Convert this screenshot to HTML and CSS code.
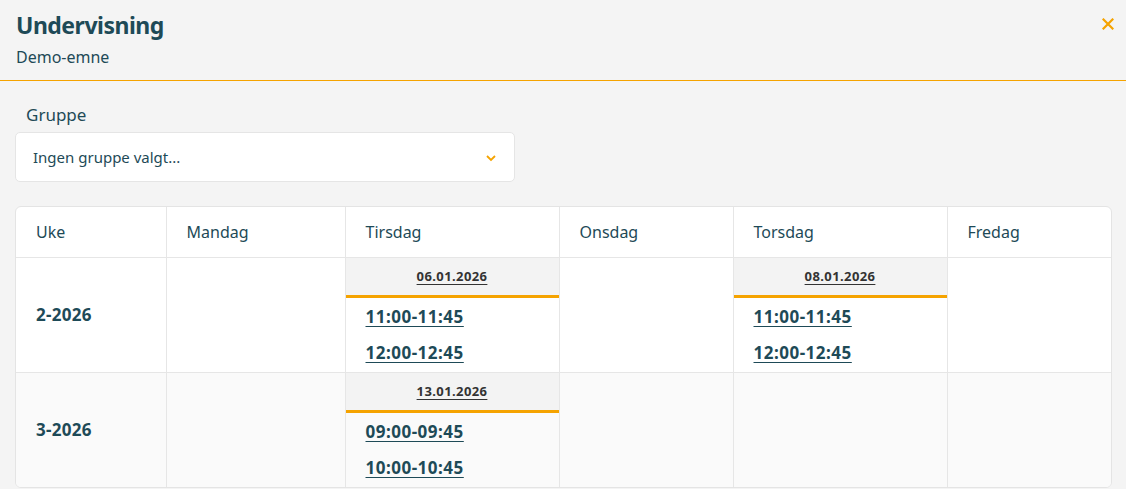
FILE: index.html
```html
<!DOCTYPE html>
<html lang="no">
<head>
<meta charset="utf-8">
<title>Undervisning</title>
<link rel="stylesheet" href="styles.css">
</head>
<body>
<header class="top">
  <div class="titles">
    <h1 class="title">Undervisning</h1>
    <div class="subtitle">Demo-emne</div>
  </div>
  <button class="close" aria-label="Lukk">
    <svg width="12" height="12" viewBox="0 0 12 12"><path d="M1.5 1.5 L10.5 10.5 M10.5 1.5 L1.5 10.5" stroke="#f5a300" stroke-width="2.2" stroke-linecap="square"/></svg>
  </button>
</header>
<main class="content">
  <label class="label">Gruppe</label>
  <div class="select">
    <span>Ingen gruppe valgt...</span>
    <svg class="chev" width="12" height="8" viewBox="0 0 12 8"><path d="M2 2 L6 6 L10 2" fill="none" stroke="#f5a300" stroke-width="1.8"/></svg>
  </div>
  <div class="tablewrap">
    <table class="sched">
      <colgroup>
        <col class="c1"><col class="c2"><col class="c3"><col class="c4"><col class="c5"><col class="c6">
      </colgroup>
      <thead>
        <tr><th>Uke</th><th>Mandag</th><th>Tirsdag</th><th>Onsdag</th><th>Torsdag</th><th>Fredag</th></tr>
      </thead>
      <tbody>
        <tr>
          <td class="week">2-2026</td>
          <td></td>
          <td class="day"><div class="date"><a href="#">06.01.2026</a></div><div class="times"><a href="#">11:00-11:45</a><a href="#">12:00-12:45</a></div></td>
          <td></td>
          <td class="day"><div class="date"><a href="#">08.01.2026</a></div><div class="times"><a href="#">11:00-11:45</a><a href="#">12:00-12:45</a></div></td>
          <td></td>
        </tr>
        <tr class="alt">
          <td class="week">3-2026</td>
          <td></td>
          <td class="day"><div class="date"><a href="#">13.01.2026</a></div><div class="times"><a href="#">09:00-09:45</a><a href="#">10:00-10:45</a></div></td>
          <td></td>
          <td></td>
          <td></td>
        </tr>
      </tbody>
    </table>
  </div>
</main>
</body>
</html>
```
FILE: styles.css
```css
* { box-sizing: border-box; }
html, body { margin: 0; padding: 0; }
body {
  background: #f4f4f4;
  font-family: "Noto Sans", "Open Sans", sans-serif;
  color: #1e4a57;
  width: 1126px;
  height: 489px;
  overflow: hidden;
}
.top {
  display: flex;
  justify-content: space-between;
  align-items: flex-start;
  padding: 9px 12px 0 16px;
  height: 81px;
  border-bottom: 1px solid #f5a300;
}
.title {
  margin: 0;
  font-size: 23px;
  font-weight: 700;
  line-height: 32px;
  letter-spacing: -0.5px;
}
.subtitle {
  font-size: 16px;
  line-height: 20px;
  margin-top: 6px;
}
.close {
  background: none;
  border: 0;
  padding: 0;
  margin-top: 9px;
  cursor: pointer;
  line-height: 0;
}
.content { padding: 0 14px 0 15px; }
.label {
  display: block;
  font-size: 17px;
  line-height: 22px;
  padding: 23px 0 0 11px;
  height: 51px;
}
.select {
  width: 500px;
  height: 50px;
  background: #fff;
  border: 1px solid #e5e5e5;
  border-radius: 5px;
  display: flex;
  align-items: center;
  justify-content: space-between;
  padding: 0 17px 0 17px;
  font-size: 15px;
}
.chev { margin-top: 1px; }
.tablewrap {
  margin-top: 24px;
  background: #fff;
  border: 1px solid #e4e4e4;
  border-radius: 6px;
  overflow: hidden;
  width: 1097px;
}
.sched {
  border-collapse: collapse;
  table-layout: fixed;
  width: 100%;
}
.c1 { width: 150px; }
.c2 { width: 179px; }
.c3 { width: 214px; }
.c4 { width: 174px; }
.c5 { width: 214px; }
.c6 { width: 164px; }
.sched th, .sched td {
  border: 1px solid #e6e6e6;
  padding: 0;
  vertical-align: top;
  text-align: left;
}
.sched tr > :first-child { border-left: 0; }
.sched tr > :last-child { border-right: 0; }
.sched thead th { border-top: 0; }
.sched tbody tr:last-child td { border-bottom: 0; }
.sched th {
  height: 50px;
  font-weight: 400;
  font-size: 16px;
  padding-left: 20px;
  vertical-align: middle;
}
.sched tbody td { height: 115px; }
.alt td { background: #fafafa; }
.sched td.week {
  vertical-align: middle;
  font-weight: 700;
  font-size: 17px;
  letter-spacing: 0.3px;
  padding-left: 20px;
}
.date {
  background: #f3f3f3;
  height: 40px;
  border-bottom: 3px solid #f5a300;
  text-align: center;
  padding-top: 9px;
  font-size: 13px;
  line-height: 18px;
  letter-spacing: 0.4px;
}
.date a { color: #333; font-weight: 700; }
.times { padding: 1px 0 0 20px; }
.times a {
  display: block;
  width: max-content;
  font-weight: 700;
  font-size: 17px;
  letter-spacing: 0.5px;
  line-height: 36px;
  color: #1e4a57;
}
a { text-decoration: underline; text-underline-offset: 3px; }
```
